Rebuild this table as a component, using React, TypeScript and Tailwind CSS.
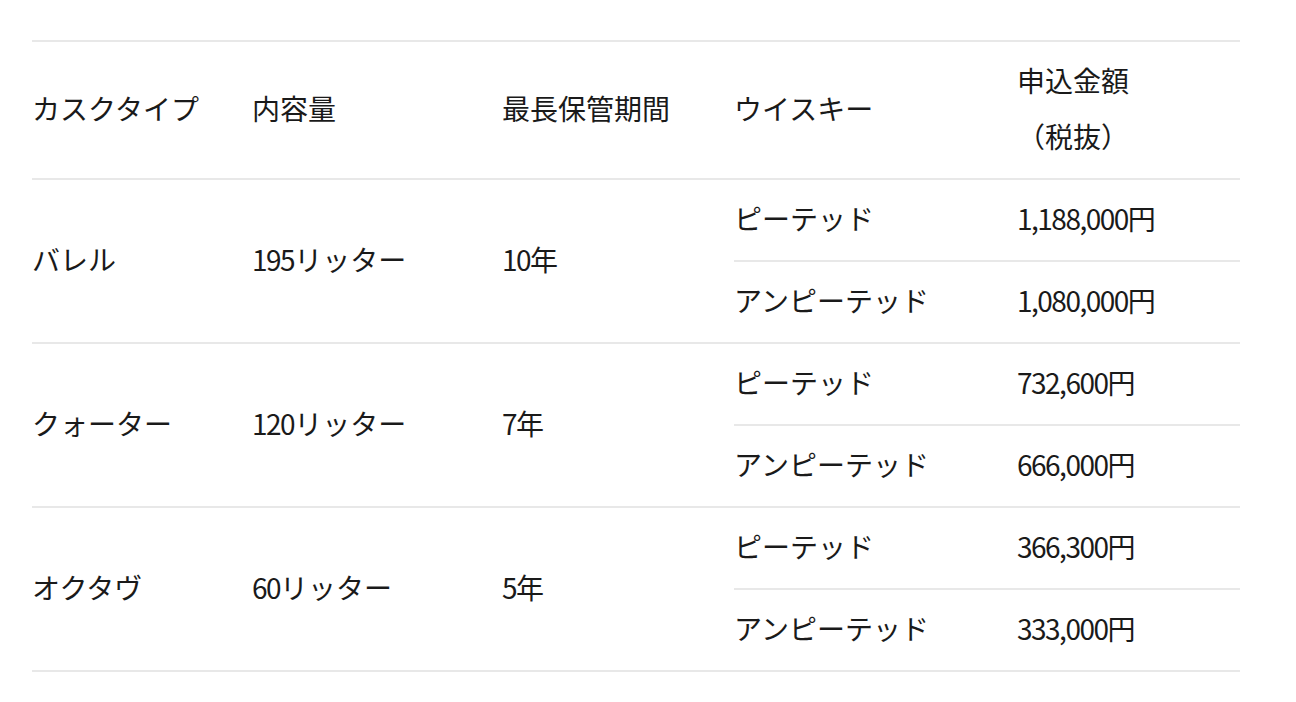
const rows = [
  {
    cask: 'バレル',
    volume: ['195', 'リッター'],
    period: ['10', '年'],
    items: [
      { whisky: 'ピーテッド', price: '1,188,000' },
      { whisky: 'アンピーテッド', price: '1,080,000' },
    ],
  },
  {
    cask: 'クォーター',
    volume: ['120', 'リッター'],
    period: ['7', '年'],
    items: [
      { whisky: 'ピーテッド', price: '732,600' },
      { whisky: 'アンピーテッド', price: '666,000' },
    ],
  },
  {
    cask: 'オクタヴ',
    volume: ['60', 'リッター'],
    period: ['5', '年'],
    items: [
      { whisky: 'ピーテッド', price: '366,300' },
      { whisky: 'アンピーテッド', price: '333,000' },
    ],
  },
]

// digits in the reference are set a bit tighter than the CJK glyphs
function Num({ children }: { children: string }) {
  return <span className="tracking-[-1.5px]">{children}</span>
}

export default function App() {
  return (
    <div
      className="min-h-screen bg-white px-8 pt-[40px] text-[28px] leading-[56px] text-[#1a1a1a]"
      style={{ fontFamily: '"Noto Sans CJK JP", "Noto Sans", sans-serif' }}
    >
      <div className="w-[1208px] border-t-2 border-[#e8e8e8]">
        {/* header */}
        <div className="grid grid-cols-[220px_250px_232px_283px_1fr] border-b-2 border-[#e8e8e8]">
          <div className="flex items-center pt-[10px] pb-[14px]">カスクタイプ</div>
          <div className="flex items-center pt-[10px] pb-[14px]">内容量</div>
          <div className="flex items-center pt-[10px] pb-[14px]">最長保管期間</div>
          <div className="flex items-center pt-[10px] pb-[14px]">ウイスキー</div>
          <div className="pt-[10px] pb-[14px]">
            <div>申込金額</div>
            <div>（税抜）</div>
          </div>
        </div>

        {/* body */}
        {rows.map((row) => (
          <div
            key={row.cask}
            className="grid grid-cols-[220px_250px_232px_1fr] border-b-2 border-[#e8e8e8]"
          >
            <div className="flex items-center pb-[5px]">{row.cask}</div>
            <div className="flex items-center pb-[5px]">
              <span>
                <Num>{row.volume[0]}</Num>
                {row.volume[1]}
              </span>
            </div>
            <div className="flex items-center pb-[5px]">
              <span>
                <Num>{row.period[0]}</Num>
                {row.period[1]}
              </span>
            </div>
            <div>
              {row.items.map((item, i) => (
                <div
                  key={item.whisky}
                  className={`grid grid-cols-[283px_1fr] pt-[10px] pb-[14px] ${
                    i < row.items.length - 1 ? 'border-b-2 border-[#e8e8e8]' : ''
                  }`}
                >
                  <div>{item.whisky}</div>
                  <div>
                    <Num>{item.price}</Num>円
                  </div>
                </div>
              ))}
            </div>
          </div>
        ))}
      </div>
    </div>
  )
}
